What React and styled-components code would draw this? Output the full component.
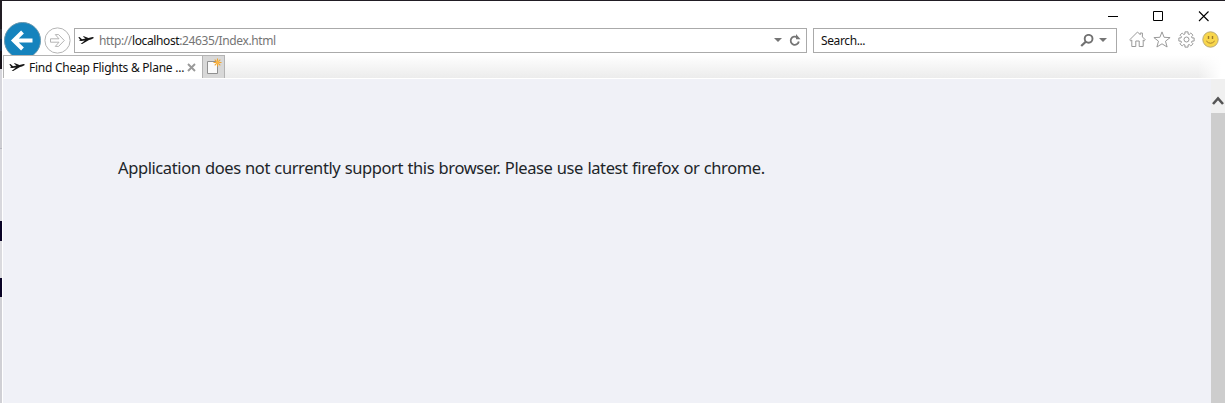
import React from "react";
import styled, { createGlobalStyle } from "styled-components";

const Global = createGlobalStyle`
  * { box-sizing: border-box; }
  body { margin: 0; overflow: hidden; background: #fff; font-family: "Noto Sans", "Open Sans", sans-serif; }
  svg { display: block; flex: none; }
`;

const Desktop = styled.div`
  display: flex;
  width: 1225px;
  height: 403px;
  border-top: 1px solid #211d24;
  overflow: hidden;
`;

const Backdrop = styled.div`
  display: flex;
  flex-direction: column;
  width: 2px;
  flex: none;
`;

const Strip = styled.div`
  height: ${(p) => p.$h}px;
  flex: none;
  background: ${(p) => p.$color};
`;

const Window = styled.div`
  display: flex;
  flex-direction: column;
  flex: 1;
  min-width: 0;
  padding-left: 1px;
  background: #fff;
`;

const TitleBar = styled.div`
  display: flex;
  justify-content: flex-end;
  height: 27px;
  flex: none;
  padding: 9px 14px 0 0;
  gap: 33px;
`;

const NavBar = styled.div`
  display: flex;
  align-items: center;
  height: 24px;
  flex: none;
  padding-left: 1px;
`;

const RoundButtons = styled.div`
  display: flex;
  align-items: center;
  gap: 3px;
  width: 70px;
  flex: none;
`;

const Field = styled.div`
  display: flex;
  align-items: center;
  width: ${(p) => p.$w}px;
  height: 25px;
  flex: none;
  border: 1px solid #aaa;
  background: #fff;
  padding: 0 5px 0 ${(p) => p.$pad}px;
  margin-right: 6px;
`;

const FieldText = styled.span`
  font-size: 12px;
  line-height: 22px;
  padding-top: 2px;
  letter-spacing: -0.38px;
  white-space: pre;
  color: ${(p) => p.$color};
  flex: 1;
  margin-left: ${(p) => p.$gap || 0}px;
  b { font-weight: 400; color: #111; }
`;

const FieldIcons = styled.div`
  display: flex;
  align-items: center;
  gap: ${(p) => p.$gap}px;
  padding-right: ${(p) => p.$end || 0}px;
`;

const Tools = styled.div`
  display: flex;
  align-items: center;
  gap: 7px;
  padding-left: 6px;
  margin-top: -2px;
`;

const TabBar = styled.div`
  display: flex;
  height: 24px;
  flex: none;
  margin-top: 3px;
  position: relative;
  z-index: 1;
  border-bottom: 1px solid #fff;
  background: linear-gradient(90deg, transparent 1195px, #fff 1218px),
    linear-gradient(#fff 0, #fafafa 25%, #ececec 100%);
`;

const Tab = styled.div`
  display: flex;
  align-items: center;
  width: 199px;
  flex: none;
  background: #fff;
  border: solid #b4b4b4;
  border-width: 1px 0 0 1px;
  padding-left: 5px;
`;

const TabTitle = styled.span`
  width: 157px;
  margin: 0 1px 0 4px;
  padding-top: 1px;
  font-size: 12px;
  line-height: 22px;
  letter-spacing: -0.25px;
  white-space: nowrap;
  color: #111;
`;

const NewTab = styled.div`
  width: 23px;
  border: 1px solid #b3b3b3;
  border-bottom: 0;
  background: #d8d8d8;
  padding: 2px 0 0 3px;
`;

const Viewport = styled.div`
  display: flex;
  flex: 1;
  background: #f0f1f7;
`;

const Page = styled.main`
  flex: 1;
  padding: 77px 0 0 115px;
`;

const Message = styled.p`
  margin: 0;
  font-size: 16.5px;
  line-height: 24px;
  letter-spacing: -0.4px;
  word-spacing: 0.5px;
  white-space: nowrap;
  color: #212529;
`;

const ScrollBar = styled.div`
  display: flex;
  flex-direction: column;
  width: 14px;
  background: #f0f0f0;
`;

const ScrollUp = styled.div`
  height: 34px;
  padding: 16px 0 0 1px;
`;

const Thumb = styled.div`
  flex: 1;
  background: #cdcdcd;
`;

const edge = [
  [28, "#211d24"], [10, "#35333b"], [12, "#17243c"], [18, "#17131a"],
  [42, "#d6d6dc"], [37, "#cdcdd2"], [1, "#b8b8c0"], [72, "#d8d8dd"],
  [20, "#090326"], [37, "#dadade"], [19, "#090326"], [106, "#d0d0d5"],
];

const Plane = () => (
  <svg width="16" height="12" viewBox="0 0 16 12" fill="#161616">
    <path d="M.3 3.2 1.5 3 4 5.2 7.5 4.5 4.8 2.6 6 2.3 10.4 4 13.6 3.2Q15.6 2.9 15.8 3.7 15.6 4.6 11 6L4.2 9.9 2.7 10 6.8 6.6 3.5 7 .8 6.7 2.2 5.9Z" />
  </svg>
);

const Caret = () => (
  <svg width="8" height="4" viewBox="0 0 8 4"><path d="M0 0h8L4 4Z" fill="#757575" /></svg>
);

const Back = () => (
  <svg width="37" height="38" viewBox="0 0 37 38">
    <circle cx="18.5" cy="19.5" r="18" fill="#1583bd" stroke="#6797ae" />
    <path d="M28.5 19.5H10M18.5 11 9.8 19.5 18.5 28" fill="none" stroke="#fff" strokeWidth="4" />
  </svg>
);

const Forward = () => (
  <svg width="27" height="27" viewBox="0 0 27 27" fill="none" stroke="#b4b4b4">
    <circle cx="13.5" cy="13.5" r="12.6" />
    <path d="M6.5 11.8H15L11.3 7.6H14.6L20.3 13.5 14.6 19.4H11.3L15 15.2H6.5Z" />
  </svg>
);

const Refresh = () => (
  <svg width="12" height="13" viewBox="0 0 12 13">
    <path d="M8.3 3.5A4.1 4.1 0 1 0 9.8 7.5" fill="none" stroke="#757575" strokeWidth="1.8" />
    <path d="M7 0v5.2h4.5Z" fill="#757575" />
  </svg>
);

const Magnifier = () => (
  <svg width="14" height="13" viewBox="0 0 14 13" fill="none" stroke="#717171">
    <circle cx="8.6" cy="4.8" r="3.9" strokeWidth="1.9" />
    <path d="M6 7.5 1.2 12" strokeWidth="2.3" />
  </svg>
);

const Home = () => (
  <svg width="17" height="17" viewBox="0 0 17 17" fill="none" stroke="#999">
    <path d="M.7 8.8 8.5 1l2.7 2.7V2h2.2v3.9l2.9 2.9-1.1 1.1-1-.9v6.5h-4V10H6.8v5.5h-4V9l-1 .9Z" />
  </svg>
);

const Star = () => (
  <svg width="18" height="17" viewBox="0 0 18 17" fill="none" stroke="#999">
    <path d="M9 .9 11.1 6.3 17.1 6.6 12.5 10.2 14.1 16 9 12.8 3.9 16 5.5 10.2.9 6.6 6.9 6.3Z" />
  </svg>
);

const gearPath = (() => {
  const pts = [];
  for (let i = 0; i < 8; i++) {
    [[-0.28, 5.7], [-0.2, 7.8], [0.2, 7.8], [0.28, 5.7]].forEach(([d, r]) => {
      const a = (i * Math.PI) / 4 + d;
      pts.push(`${(8.5 + r * Math.sin(a)).toFixed(2)} ${(8.5 - r * Math.cos(a)).toFixed(2)}`);
    });
  }
  return `M${pts.join("L")}Z`;
})();

const Gear = () => (
  <svg width="17" height="17" viewBox="0 0 17 17" fill="none" stroke="#999">
    <path d={gearPath} />
    <circle cx="8.5" cy="8.5" r="2.5" />
  </svg>
);

const Smiley = () => (
  <svg width="17" height="17" viewBox="0 0 17 17">
    <circle cx="8.5" cy="8.5" r="7.7" fill="#f8d64c" stroke="#b9aa78" />
    <path d="M6.5 5v3M10.5 5v3" stroke="#9c7a2a" strokeWidth="1.4" />
    <path d="M4.3 10Q8.5 14.5 12.7 10" fill="none" stroke="#a9822a" />
  </svg>
);

const NewPage = () => (
  <svg width="18" height="18" viewBox="0 0 18 18">
    <path d="M1.5 3.5h10v12h-10Z" fill="#fafafa" stroke="#909090" />
    <path d="M11.5.5v8M7.5 4.5h8M8.7 1.7l5.6 5.6M14.3 1.7 8.7 7.3" stroke="#f0a52f" strokeWidth="1.1" />
    <circle cx="11.5" cy="4.5" r="1.8" fill="#fbb545" />
  </svg>
);

export default function App() {
  return (
    <Desktop>
      <Global />
      <Backdrop>{edge.map(([h, c], i) => <Strip key={i} $h={h} $color={c} />)}</Backdrop>
      <Window>
        <TitleBar>
          <svg width="13" height="13"><path d="M2 6.5h10" stroke="#000" /></svg>
          <svg width="13" height="13"><path d="M1.5 1.5h9v9h-9Z" fill="none" stroke="#000" /></svg>
          <svg width="13" height="13"><path d="m1 1.5 9.5 9.5m0-9.5L1 11" stroke="#000" strokeWidth="1.1" /></svg>
        </TitleBar>
        <NavBar>
          <RoundButtons><Back /><Forward /></RoundButtons>
          <Field $w={733} $pad={3}>
            <Plane />
            <FieldText $color="#757575" $gap={5}>http://<b>localhost</b>:24635/Index.html</FieldText>
            <FieldIcons $gap={7}><Caret /><Refresh /></FieldIcons>
          </Field>
          <Field $w={304} $pad={7}>
            <FieldText $color="#111">Search...</FieldText>
            <FieldIcons $gap={5} $end={4}><Magnifier /><Caret /></FieldIcons>
          </Field>
          <Tools><Home /><Star /><Gear /><Smiley /></Tools>
        </NavBar>
        <TabBar>
          <Tab>
            <Plane />
            <TabTitle>Find Cheap Flights &amp; Plane ...</TabTitle>
            <svg width="9" height="9" viewBox="0 0 9 9"><path d="m1 1 7 7m0-7-7 7" stroke="#999" strokeWidth="1.9" /></svg>
          </Tab>
          <NewTab><NewPage /></NewTab>
        </TabBar>
        <Viewport>
          <Page><Message>Application does not currently support this browser. Please use latest firefox or chrome.</Message></Page>
          <ScrollBar>
            <ScrollUp>
              <svg width="12" height="11" viewBox="0 0 12 11"><path d="m1 9 5-5.5L11 9" fill="none" stroke="#555" strokeWidth="2.6" /></svg>
            </ScrollUp>
            <Thumb />
          </ScrollBar>
        </Viewport>
      </Window>
    </Desktop>
  );
}
